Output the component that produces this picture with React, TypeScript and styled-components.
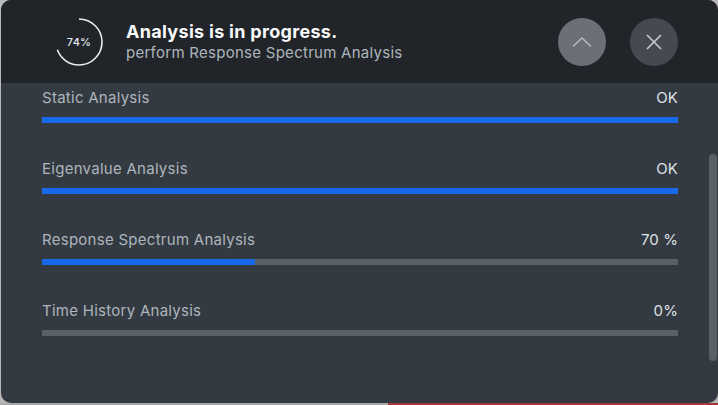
import React from "react";
import styled, { createGlobalStyle } from "styled-components";

const GlobalStyle = createGlobalStyle`
  html, body {
    margin: 0;
    padding: 0;
    background: #b9b9b9;
    font-family: Inter, "Noto Sans", "Liberation Sans", sans-serif;
  }
  #root {
    width: 718px;
    height: 405px;
    overflow: hidden;
  }
`;

const Page = styled.div`
  display: flex;
  flex-direction: column;
  width: 718px;
  height: 405px;
`;

const Panel = styled.div`
  position: relative;
  margin-left: 1px;
  width: 717px;
  height: 403px;
  border-radius: 10px;
  overflow: hidden;
  display: flex;
  flex-direction: column;
  background: #343a41;
`;

const Header = styled.header`
  flex: 0 0 83px;
  display: flex;
  align-items: center;
  padding: 0 40px 0 53px;
  background: #212529;
`;

const Ring = styled.div`
  position: relative;
  flex: 0 0 50px;
  width: 50px;
  height: 50px;
  display: flex;
  align-items: center;
  justify-content: center;
`;

const RingSvg = styled.svg`
  position: absolute;
  inset: 0;
`;

const RingLabel = styled.span`
  font-size: 11px;
  font-weight: 500;
  color: #e3e9f2;
  letter-spacing: 0.2px;
`;

const TitleBlock = styled.div`
  flex: 1;
  display: flex;
  flex-direction: column;
  margin-left: 22px;
`;

const Title = styled.div`
  font-size: 18px;
  line-height: 22px;
  font-weight: 700;
  letter-spacing: 0.3px;
  color: #f8f9fa;
`;

const Subtitle = styled.div`
  font-size: 15px;
  line-height: 20px;
  letter-spacing: 0.27px;
  color: #adb5bd;
`;

const Actions = styled.div`
  display: flex;
  gap: 24px;
`;

const RoundButton = styled.button<{ $tone: string }>`
  width: 48px;
  height: 48px;
  border: none;
  border-radius: 50%;
  padding: 0;
  display: flex;
  align-items: center;
  justify-content: center;
  background: ${(p) => p.$tone};
  cursor: pointer;
`;

const Body = styled.div`
  position: relative;
  flex: 1;
  padding: 5px 40px 0 41px;
`;

const Row = styled.div`
  display: flex;
  flex-direction: column;
  margin-bottom: 36px;
`;

const RowHead = styled.div`
  display: flex;
  justify-content: space-between;
  font-size: 15px;
  line-height: 20px;
`;

const RowLabel = styled.span`
  color: #adb5bd;
  letter-spacing: 0.27px;
`;

const RowValue = styled.span`
  color: #dee2e6;
  letter-spacing: 0.1px;
`;

const Track = styled.div`
  margin-top: 9px;
  height: 6px;
  background: #5a6068;
`;

const Fill = styled.div`
  height: 100%;
  background: #1769e9;
`;

const ScrollThumb = styled.div`
  position: absolute;
  right: 1px;
  top: 71px;
  width: 8px;
  height: 207px;
  border-radius: 4px;
  background: #5b6067;
`;

const BottomStrip = styled.div`
  display: flex;
  height: 2px;
`;

const StripPart = styled.div<{ $color: string; $width?: string }>`
  flex: ${(p) => (p.$width ? `0 0 ${p.$width}` : "1")};
  background: ${(p) => p.$color};
`;

type Step = { name: string; value: string; fill: number };

const steps: Step[] = [
  { name: "Static Analysis", value: "OK", fill: 100 },
  { name: "Eigenvalue Analysis", value: "OK", fill: 100 },
  { name: "Response Spectrum Analysis", value: "70 %", fill: 33.5 },
  { name: "Time History Analysis", value: "0%", fill: 0 },
];

function ProgressRing({ percent }: { percent: number }) {
  const r = 23;
  const c = 2 * Math.PI * r;
  const shown = 0.69;
  return (
    <Ring>
      <RingSvg width="50" height="50" viewBox="0 0 50 50">
        <circle
          cx="25"
          cy="25"
          r={r}
          fill="none"
          stroke="#e9ecef"
          strokeWidth="1.6"
          strokeDasharray={`${c * shown} ${c}`}
          transform="rotate(-90 25 25)"
        />
      </RingSvg>
      <RingLabel>{percent}%</RingLabel>
    </Ring>
  );
}

export default function App() {
  return (
    <>
      <GlobalStyle />
      <Page>
        <Panel>
          <Header>
            <ProgressRing percent={74} />
            <TitleBlock>
              <Title>Analysis is in progress.</Title>
              <Subtitle>perform Response Spectrum Analysis</Subtitle>
            </TitleBlock>
            <Actions>
              <RoundButton $tone="#6b7078" aria-label="Collapse">
                <svg width="20" height="12" viewBox="0 0 20 12">
                  <path d="M1 10.5 L10 2 L19 10.5" fill="none" stroke="#b6bbc1" strokeWidth="1.5" />
                </svg>
              </RoundButton>
              <RoundButton $tone="#454a52" aria-label="Close">
                <svg width="16" height="16" viewBox="0 0 16 16">
                  <path d="M1 1 L15 15 M15 1 L1 15" fill="none" stroke="#c9cdd2" strokeWidth="1.6" />
                </svg>
              </RoundButton>
            </Actions>
          </Header>
          <Body>
            {steps.map((s) => (
              <Row key={s.name}>
                <RowHead>
                  <RowLabel>{s.name}</RowLabel>
                  <RowValue>{s.value}</RowValue>
                </RowHead>
                <Track>
                  <Fill style={{ width: `${s.fill}%` }} />
                </Track>
              </Row>
            ))}
            <ScrollThumb />
          </Body>
        </Panel>
        <BottomStrip>
          <StripPart $color="#a8a8a8" $width="388px" />
          <StripPart $color="#a33a3a" />
        </BottomStrip>
      </Page>
    </>
  );
}
